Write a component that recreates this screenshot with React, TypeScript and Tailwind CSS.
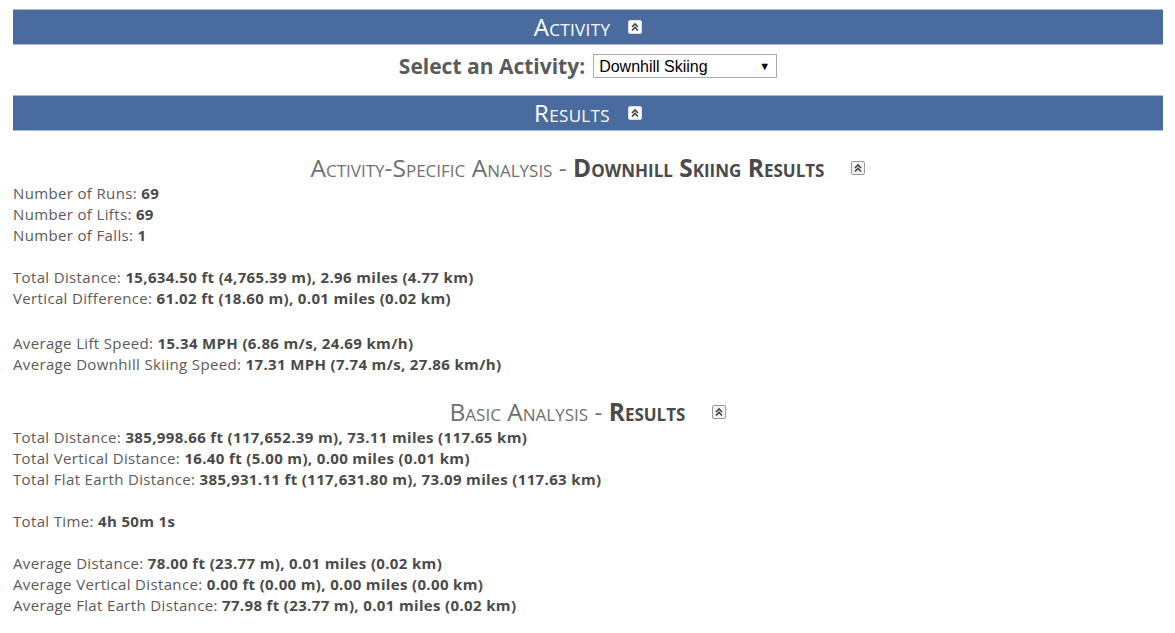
import React from "react";

function Chevrons({ inBar }: { inBar?: boolean }) {
  return (
    <span
      className={
        "inline-flex h-[14px] w-[14px] items-center justify-center rounded-[2px] border " +
        (inBar ? "border-[#d8dee8] bg-white" : "border-[#9a9a9a] bg-[#f4f4f4]")
      }
    >
      <svg width="10" height="10" viewBox="0 0 10 10">
        <path d="M2 5 L5 2 L8 5" fill="none" stroke="#444" strokeWidth="1.7" />
        <path d="M2 8.5 L5 5.5 L8 8.5" fill="none" stroke="#444" strokeWidth="1.7" />
      </svg>
    </span>
  );
}

function Bar({ title }: { title: string }) {
  return (
    <div className="flex h-[36px] items-center justify-center gap-[18px] border-y border-[#a8b8d2] bg-[#4a6b9e] text-white">
      <span className="text-[24px] leading-none [font-variant:small-caps]">{title}</span>
      <Chevrons inBar />
    </div>
  );
}

function Row({ label, value }: { label: string; value: string }) {
  return (
    <div className="h-[21px] whitespace-nowrap">
      {label} <b className="font-bold text-[#4a4a4a]">{value}</b>
    </div>
  );
}

function Gap({ h }: { h?: string }) {
  return <div className={h ?? "h-[21px]"} />;
}

function Heading({ light, bold }: { light: string; bold: string }) {
  return (
    <div className="flex h-[30px] items-center justify-center gap-[27px] text-[#707070]">
      <span className="text-[24.5px] leading-none tracking-normal [font-variant:small-caps]">
        {light} - <b className="font-bold text-[#4a4a4a]">{bold}</b>
      </span>
      <Chevrons />
    </div>
  );
}

export default function App() {
  return (
    <div
      className="mx-[13px] w-[1150px] bg-white pt-[9px] text-[15px] leading-[21px] tracking-[0.35px] text-[#5a5a5a]"
      style={{ fontFamily: '"Open Sans", "Noto Sans", sans-serif' }}
    >
      <Bar title="Activity" />
      <div className="flex h-[50px] items-center justify-center gap-[8px] pb-[8px] tracking-normal">
        <span className="text-[21px] font-bold text-[#5a5a5a]">Select an Activity:</span>
        <div
          className="flex h-[24px] w-[184px] items-center justify-between border border-[#a9a9a9] bg-white pl-[5px] pr-[6px] text-[16px] text-black"
          style={{ fontFamily: '"Liberation Sans", Arial, sans-serif' }}
        >
          <span>Downhill Skiing</span>
          <span className="text-[11px]">▼</span>
        </div>
      </div>
      <Bar title="Results" />
      <div className="pt-[22px]">
        <Heading light="Activity-Specific Analysis" bold="Downhill Skiing Results" />
      </div>
      <div>
        <Row label="Number of Runs:" value="69" />
        <Row label="Number of Lifts:" value="69" />
        <Row label="Number of Falls:" value="1" />
        <Gap />
        <Row label="Total Distance:" value="15,634.50 ft (4,765.39 m), 2.96 miles (4.77 km)" />
        <Row label="Vertical Difference:" value="61.02 ft (18.60 m), 0.01 miles (0.02 km)" />
        <Gap h="h-[24px]" />
        <Row label="Average Lift Speed:" value="15.34 MPH (6.86 m/s, 24.69 km/h)" />
        <Row label="Average Downhill Skiing Speed:" value="17.31 MPH (7.74 m/s, 27.86 km/h)" />
      </div>
      <div className="pt-[22px]">
        <Heading light="Basic Analysis" bold="Results" />
      </div>
      <div>
        <Row label="Total Distance:" value="385,998.66 ft (117,652.39 m), 73.11 miles (117.65 km)" />
        <Row label="Total Vertical Distance:" value="16.40 ft (5.00 m), 0.00 miles (0.01 km)" />
        <Row label="Total Flat Earth Distance:" value="385,931.11 ft (117,631.80 m), 73.09 miles (117.63 km)" />
        <Gap />
        <Row label="Total Time:" value="4h 50m 1s" />
        <Gap />
        <Row label="Average Distance:" value="78.00 ft (23.77 m), 0.01 miles (0.02 km)" />
        <Row label="Average Vertical Distance:" value="0.00 ft (0.00 m), 0.00 miles (0.00 km)" />
        <Row label="Average Flat Earth Distance:" value="77.98 ft (23.77 m), 0.01 miles (0.02 km)" />
      </div>
    </div>
  );
}
